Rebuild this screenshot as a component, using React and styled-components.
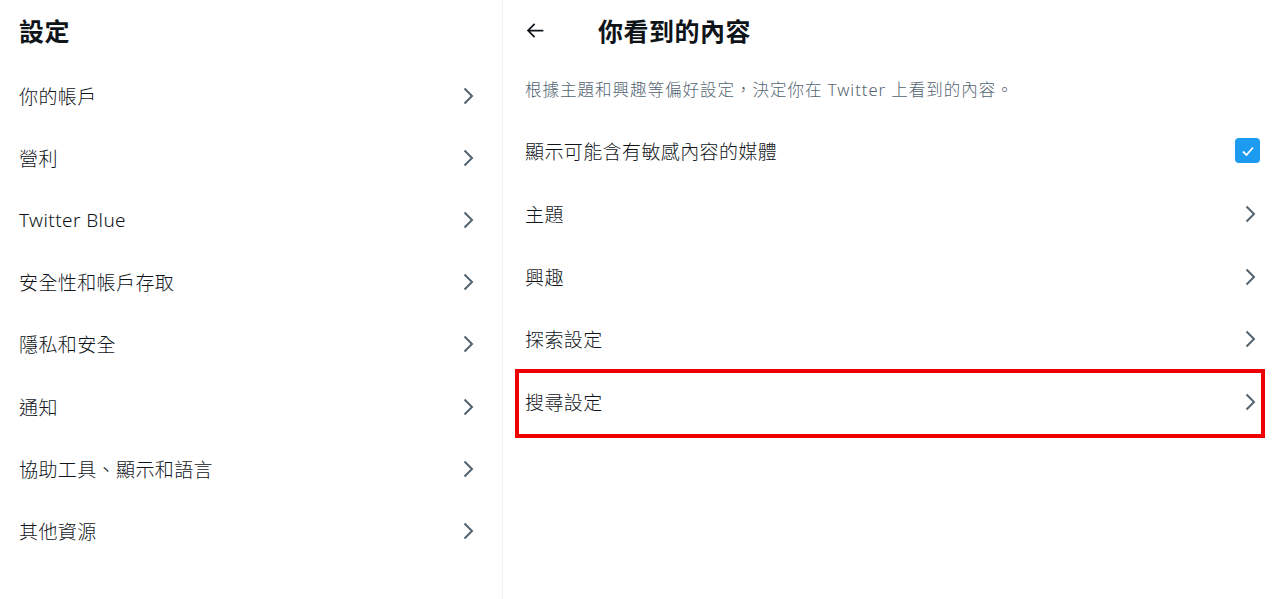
import React from "react"
import styled, { createGlobalStyle } from "styled-components"

const GlobalStyle = createGlobalStyle`
  html, body {
    margin: 0;
    padding: 0;
    background: #ffffff;
  }
  body {
    font-family: "Noto Sans", "Noto Sans CJK TC", sans-serif;
    color: #0f1419;
  }
`

const Page = styled.div`
  display: flex;
  width: 1280px;
  height: 599px;
  overflow: hidden;
`

const SideCol = styled.nav`
  width: 502px;
  border-right: 1px solid #eff3f4;
  display: flex;
  flex-direction: column;
`

const MainCol = styled.main`
  flex: 1;
  display: flex;
  flex-direction: column;
`

const Header = styled.div`
  height: 60px;
  flex-shrink: 0;
  display: flex;
  align-items: center;
  padding: 0 19px;
  gap: 42px;

  h2 {
    margin: 0;
    font-size: 25px;
    font-weight: 700;
    letter-spacing: 0.5px;
  }
`

const MainHeader = styled(Header)`
  padding: 0 22px;
`

const BackBtn = styled.button`
  border: none;
  background: none;
  padding: 0;
  width: 31px;
  display: flex;
  align-items: center;
  color: #0f1419;
`

const Row = styled.div`
  position: relative;
  flex-shrink: 0;
  height: ${({ $h }) => $h || "62.5px"};
  display: flex;
  align-items: center;
  justify-content: space-between;
  padding: 0 ${({ $side }) => ($side ? "24px 0 19px" : "20px 0 22px")};
  font-size: 19px;
  font-weight: 300;
  letter-spacing: 0.4px;
  color: #0f1419;

  ${({ $marked }) =>
    $marked &&
    `
    &::after {
      content: "";
      position: absolute;
      left: 12px;
      right: 15px;
      top: -2px;
      bottom: -5px;
      border: 4px solid #ee0000;
      pointer-events: none;
    }
  `}
`

const SideList = styled.div`
  padding-top: 5px;
`

const Desc = styled.p`
  margin: 0;
  padding: 0 22px;
  height: 58px;
  flex-shrink: 0;
  display: flex;
  align-items: center;
  font-size: 16.5px;
  font-weight: 300;
  color: #536471;
  letter-spacing: 1px;
`

const Check = styled.span`
  width: 25px;
  height: 25px;
  border-radius: 4px;
  background: #1d9bf0;
  display: flex;
  align-items: center;
  justify-content: center;
`

const Chevron = () => (
  <svg width="20" height="20" viewBox="0 0 20 20">
    <path d="M6.5 2.5 L14 10 L6.5 17.5" fill="none" stroke="#536471" strokeWidth="2" />
  </svg>
)

const sideItems = [
  "你的帳戶",
  "營利",
  "Twitter Blue",
  "安全性和帳戶存取",
  "隱私和安全",
  "通知",
  "協助工具、顯示和語言",
  "其他資源",
]

const mainItems = ["主題", "興趣", "探索設定", "搜尋設定"]

export default function App() {
  return (
    <Page>
      <GlobalStyle />
      <SideCol>
        <Header>
          <h2>設定</h2>
        </Header>
        <SideList>
          {sideItems.map((item) => (
            <Row key={item} $side $h="62.1px">
              <span>{item}</span>
              <Chevron />
            </Row>
          ))}
        </SideList>
      </SideCol>
      <MainCol>
        <MainHeader>
          <BackBtn>
            <svg width="21" height="21" viewBox="0 0 24 24">
              <path
                d="M21 12 H3.5 M11 4.5 L3.5 12 L11 19.5"
                fill="none"
                stroke="#0f1419"
                strokeWidth="2"
              />
            </svg>
          </BackBtn>
          <h2>你看到的內容</h2>
        </MainHeader>
        <Desc>根據主題和興趣等偏好設定，決定你在 Twitter 上看到的內容。</Desc>
        <Row $h="65px">
          <span>顯示可能含有敏感內容的媒體</span>
          <Check>
            <svg width="16" height="16" viewBox="0 0 16 16">
              <path d="M3 8.5 L6.5 12 L13 4.5" fill="none" stroke="#fff" strokeWidth="1.8" />
            </svg>
          </Check>
        </Row>
        {mainItems.map((item, i) => (
          <Row key={item} $marked={i === mainItems.length - 1}>
            <span>{item}</span>
            <Chevron />
          </Row>
        ))}
      </MainCol>
    </Page>
  )
}
